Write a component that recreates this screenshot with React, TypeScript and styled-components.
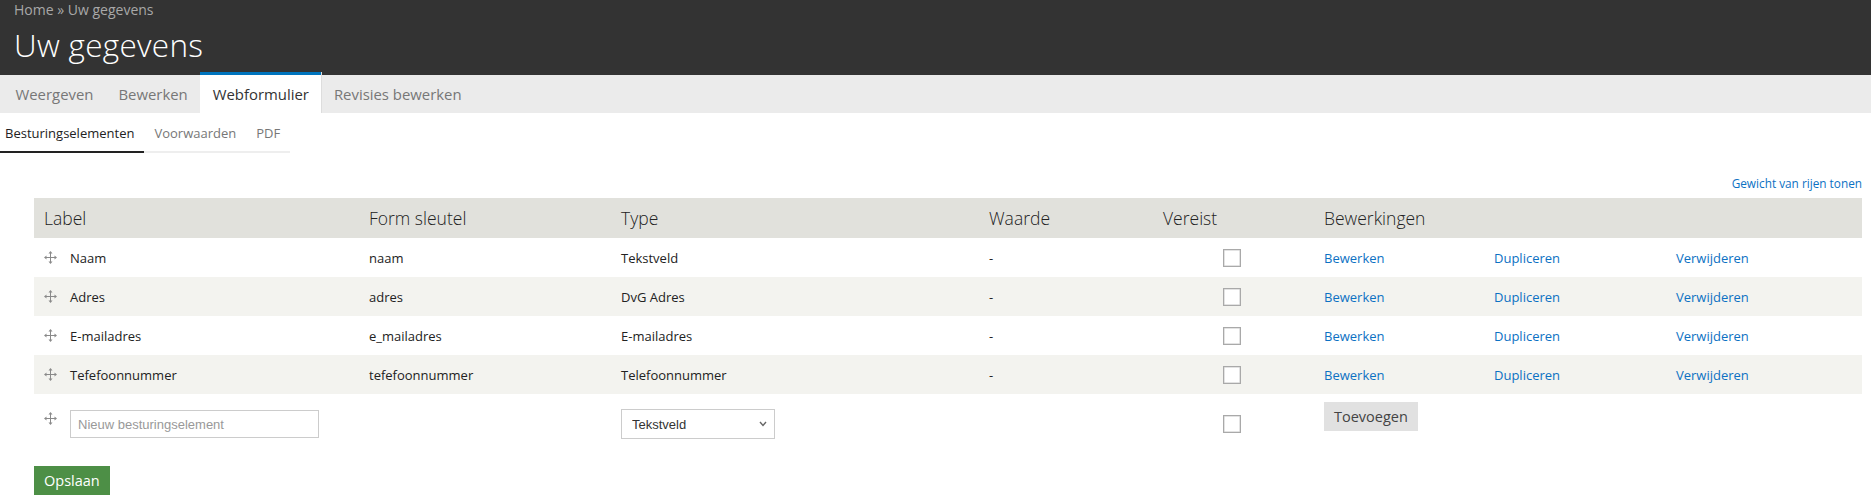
import React from "react";
import styled, { createGlobalStyle } from "styled-components";

const GlobalStyle = createGlobalStyle`
  html, body { margin: 0; padding: 0; background: #fff; }
  body { font-family: "Open Sans", "Noto Sans", sans-serif; color: #222; }
  * { box-sizing: border-box; }
`;

const Header = styled.header`
  background: #333;
  height: 75px;
  padding: 0 14px;
  color: #fff;
`;

const Breadcrumb = styled.div`
  font-size: 14px;
  line-height: 20px;
  color: #a8a8a8;
  a { color: #a8a8a8; text-decoration: none; }
`;

const Title = styled.h1`
  margin: 4px 0 0;
  font-size: 31.5px;
  font-weight: 300;
  line-height: 41px;
  color: #fff;
  letter-spacing: 0.3px;
`;

const TabBar = styled.nav`
  display: flex;
  background: #ebebeb;
  height: 38px;
  padding-left: 3px;
`;

const Tab = styled.a<{ $active?: boolean }>`
  display: flex;
  align-items: center;
  padding: 0 12.5px;
  font-size: 14.9px;
  text-decoration: none;
  color: ${(p) => (p.$active ? "#333" : "#777")};
  background: ${(p) => (p.$active ? "#fff" : "transparent")};
  ${(p) =>
    p.$active
      ? `margin-top: -3px; height: 41px; border-top: 3px solid #0074bd; box-shadow: 1px 0 0 #ddd;`
      : ""}
`;

const SubTabs = styled.div`
  display: inline-flex;
  border-bottom: 2px solid #eee;
`;

const SubTab = styled.a<{ $active?: boolean; $first?: boolean }>`
  display: block;
  padding: 10px 10px 8px ${(p) => (p.$first ? "5px" : "10px")};
  margin-bottom: -2px;
  font-size: 13px;
  line-height: 20px;
  text-decoration: none;
  color: ${(p) => (p.$active ? "#222" : "#777")};
  border-bottom: 2px solid ${(p) => (p.$active ? "#222" : "transparent")};
`;

const Content = styled.main`
  padding: 0 9px 0 34px;
`;

const TableTools = styled.div`
  margin: 21px 0 5px;
  text-align: right;
  font-size: 12px;
  line-height: 18px;
`;

const Link = styled.a`
  color: #0c71c3;
  text-decoration: none;
  font-size: 13px;
`;

const SmallLink = styled(Link)`
  font-size: 11.8px;
`;

const Table = styled.table`
  width: 100%;
  border-collapse: collapse;
  table-layout: fixed;
`;

const HeadCell = styled.th`
  background: #e1e1dc;
  height: 40px;
  padding: 0 10px;
  text-align: left;
  font-size: 17.5px;
  font-weight: 300;
  color: #222;
`;

const Row = styled.tr<{ $alt?: boolean }>`
  background: ${(p) => (p.$alt ? "#f3f3ef" : "#fff")};
`;

const Cell = styled.td`
  height: 39px;
  padding: 0 10px;
  font-size: 13px;
  color: #222;
  vertical-align: middle;
`;

const AddCell = styled.td<{ $top: number }>`
  padding: ${(p) => p.$top}px 10px 8px;
  vertical-align: top;
  font-size: 13px;
`;

const LabelWrap = styled.div<{ $top?: boolean }>`
  display: flex;
  align-items: ${(p) => (p.$top ? "flex-start" : "center")};
  gap: 13px;
`;

const DragHandle = styled.span<{ $offset?: number }>`
  display: inline-flex;
  width: 13px;
  height: 13px;
  margin-top: ${(p) => p.$offset ?? 0}px;
  flex: none;
`;

const CheckBox = styled.span`
  display: block;
  width: 18px;
  height: 18px;
  margin-left: 60px;
  border: 1px solid #a9a9a9;
  box-shadow: inset 0 0 0 0.5px #c8c8c8;
  background: #fff;
`;

const TextInput = styled.input`
  width: 249px;
  height: 28px;
  border: 1px solid #ccc;
  padding: 0 7px;
  font-family: "Liberation Sans", Arial, sans-serif;
  font-size: 13px;
  color: #333;
  outline: none;
  &::placeholder { color: #999; }
`;

const SelectWrap = styled.div`
  position: relative;
  width: 154px;
  height: 30px;
`;

const Select = styled.select`
  appearance: none;
  width: 100%;
  height: 100%;
  border: 1px solid #ccc;
  background: #fff;
  padding: 0 10px;
  font-family: "Liberation Sans", Arial, sans-serif;
  font-size: 13px;
  color: #333;
  outline: none;
`;

const Chevron = styled.svg`
  position: absolute;
  right: 8px;
  top: 12px;
  pointer-events: none;
`;

const GrayButton = styled.button`
  height: 29px;
  padding: 0 10px;
  border: none;
  background: #e1e1e1;
  color: #444;
  font-family: "Open Sans", sans-serif;
  font-size: 14.5px;
`;

const Actions = styled.div`
  margin-top: 19px;
`;

const SaveButton = styled.button`
  height: 29px;
  padding: 0 10px;
  border: none;
  background: #4d8f46;
  color: #fff;
  font-family: "Open Sans", sans-serif;
  font-size: 14.5px;
`;

const MoveIcon = () => (
  <svg width="13" height="13" viewBox="0 0 13 13" fill="#8a8a8a">
    <rect x="6" y="2" width="1" height="9" />
    <rect x="2" y="6" width="9" height="1" />
    <polygon points="6.5,0 4.5,2.5 8.5,2.5" />
    <polygon points="6.5,13 4.5,10.5 8.5,10.5" />
    <polygon points="0,6.5 2.5,4.5 2.5,8.5" />
    <polygon points="13,6.5 10.5,4.5 10.5,8.5" />
  </svg>
);

const rows = [
  { label: "Naam", key: "naam", type: "Tekstveld" },
  { label: "Adres", key: "adres", type: "DvG Adres" },
  { label: "E-mailadres", key: "e_mailadres", type: "E-mailadres" },
  { label: "Tefefoonnummer", key: "tefefoonnummer", type: "Telefoonnummer" },
];

export default function App() {
  return (
    <>
      <GlobalStyle />
      <Header>
        <Breadcrumb>
          <a href="#">Home</a> » <a href="#">Uw gegevens</a>
        </Breadcrumb>
        <Title>Uw gegevens</Title>
      </Header>
      <TabBar>
        <Tab href="#">Weergeven</Tab>
        <Tab href="#">Bewerken</Tab>
        <Tab href="#" $active>Webformulier</Tab>
        <Tab href="#">Revisies bewerken</Tab>
      </TabBar>
      <SubTabs>
        <SubTab href="#" $active $first>Besturingselementen</SubTab>
        <SubTab href="#">Voorwaarden</SubTab>
        <SubTab href="#">PDF</SubTab>
      </SubTabs>
      <Content>
        <TableTools>
          <SmallLink href="#">Gewicht van rijen tonen</SmallLink>
        </TableTools>
        <Table>
          <colgroup>
            <col style={{ width: 325 }} />
            <col style={{ width: 252 }} />
            <col style={{ width: 368 }} />
            <col style={{ width: 174 }} />
            <col style={{ width: 161 }} />
            <col style={{ width: 170 }} />
            <col style={{ width: 182 }} />
            <col style={{ width: 196 }} />
          </colgroup>
          <thead>
            <tr>
              <HeadCell>Label</HeadCell>
              <HeadCell>Form sleutel</HeadCell>
              <HeadCell>Type</HeadCell>
              <HeadCell>Waarde</HeadCell>
              <HeadCell>Vereist</HeadCell>
              <HeadCell colSpan={3}>Bewerkingen</HeadCell>
            </tr>
          </thead>
          <tbody>
            {rows.map((r, i) => (
              <Row key={r.key} $alt={i % 2 === 1}>
                <Cell>
                  <LabelWrap>
                    <DragHandle><MoveIcon /></DragHandle>
                    <span>{r.label}</span>
                  </LabelWrap>
                </Cell>
                <Cell>{r.key}</Cell>
                <Cell>{r.type}</Cell>
                <Cell>-</Cell>
                <Cell><CheckBox /></Cell>
                <Cell><Link href="#">Bewerken</Link></Cell>
                <Cell><Link href="#">Dupliceren</Link></Cell>
                <Cell><Link href="#">Verwijderen</Link></Cell>
              </Row>
            ))}
            <Row>
              <AddCell $top={16}>
                <LabelWrap $top>
                  <DragHandle $offset={2}><MoveIcon /></DragHandle>
                  <TextInput placeholder="Nieuw besturingselement" />
                </LabelWrap>
              </AddCell>
              <AddCell $top={16} />
              <AddCell $top={15}>
                <SelectWrap>
                  <Select defaultValue="Tekstveld">
                    <option>Tekstveld</option>
                  </Select>
                  <Chevron width="8" height="6" viewBox="0 0 8 6">
                    <polyline points="1,1 4,4.5 7,1" fill="none" stroke="#666" strokeWidth="1.4" />
                  </Chevron>
                </SelectWrap>
              </AddCell>
              <AddCell $top={16} />
              <AddCell $top={21}><CheckBox /></AddCell>
              <AddCell $top={8} colSpan={3}>
                <GrayButton>Toevoegen</GrayButton>
              </AddCell>
            </Row>
          </tbody>
        </Table>
        <Actions>
          <SaveButton>Opslaan</SaveButton>
        </Actions>
      </Content>
    </>
  );
}
